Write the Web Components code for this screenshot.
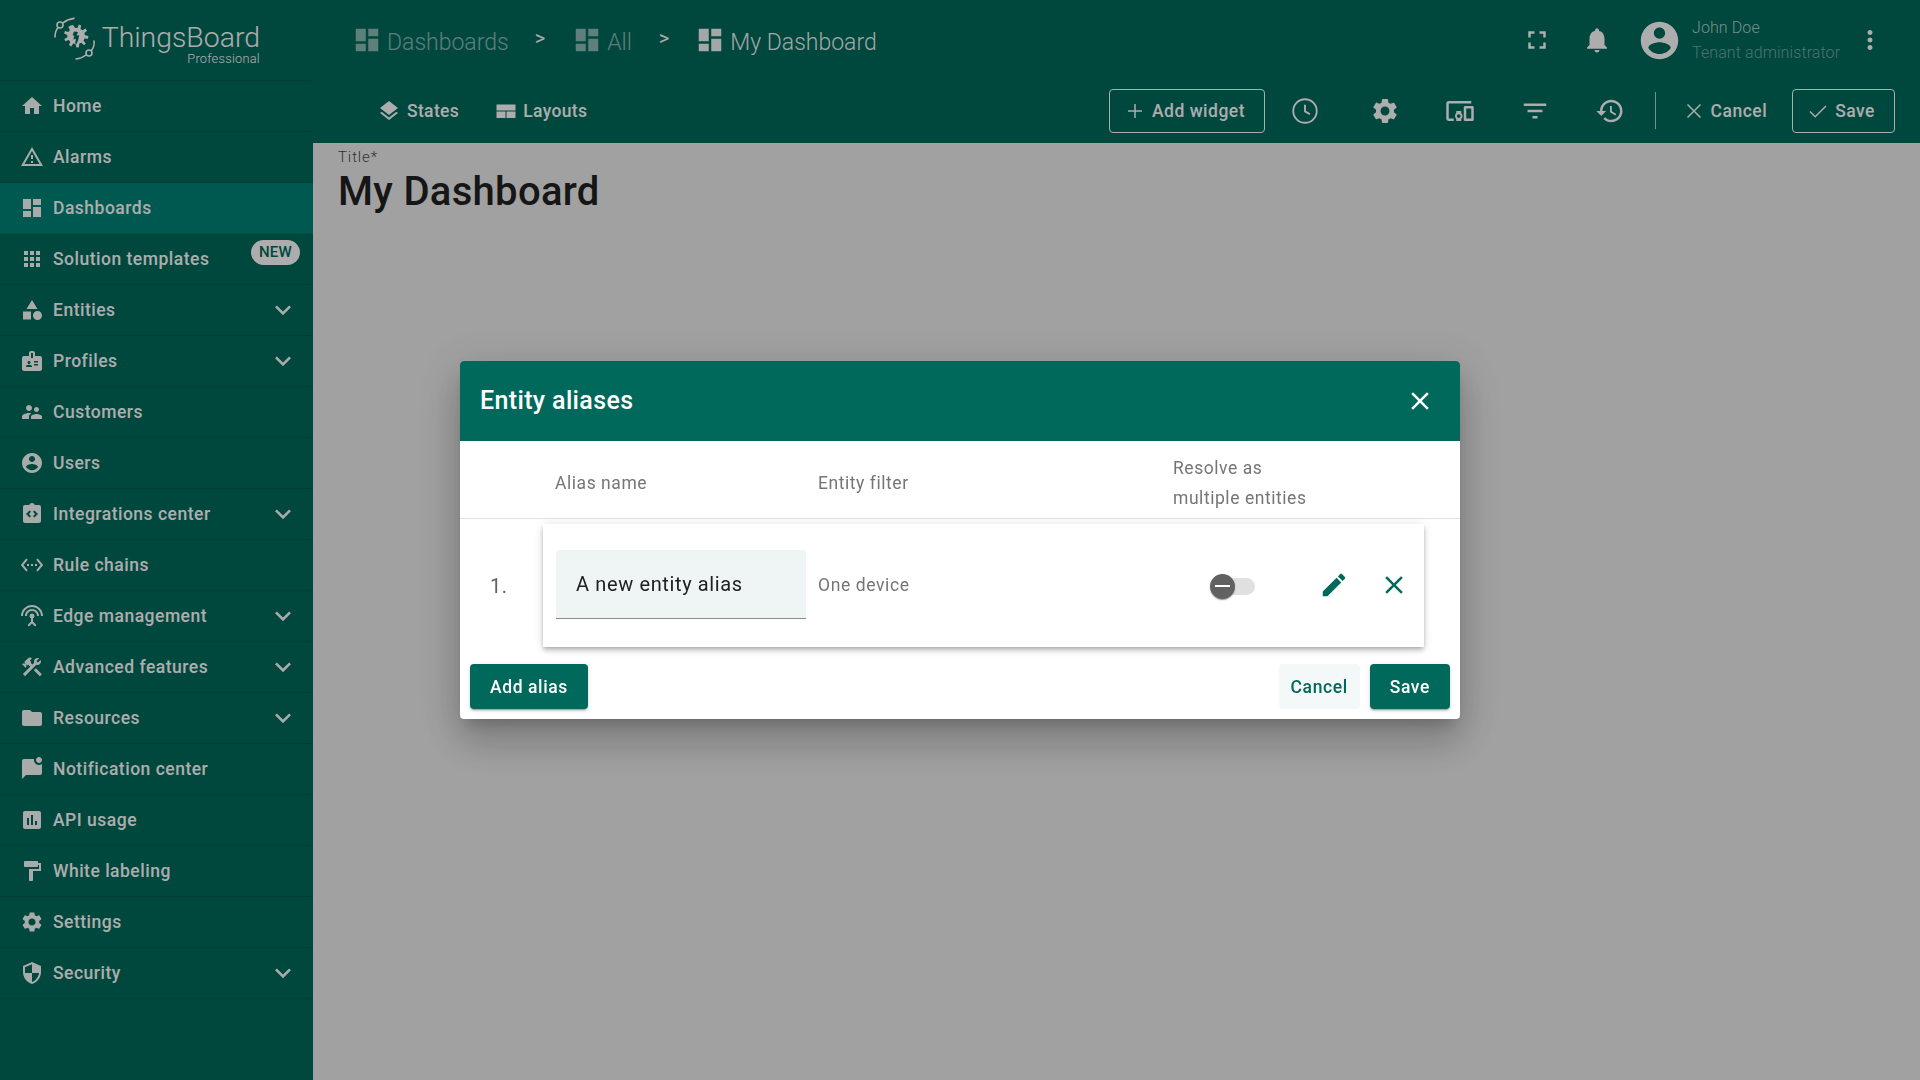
<!DOCTYPE html>
<html lang="en">
<head>
<meta charset="utf-8">
<title>ThingsBoard</title>
<style>
  html, body { margin: 0; height: 100%; }
  body { font-family: Roboto, "Liberation Sans", sans-serif; overflow: hidden; background: #eeeeee; }
</style>
</head>
<body>
<tb-app>
  <tb-sidenav slot="side">
    <tb-nav-item icon="home">Home</tb-nav-item>
    <tb-nav-item icon="warning">Alarms</tb-nav-item>
    <tb-nav-item icon="dashboard" active>Dashboards</tb-nav-item>
    <tb-nav-item icon="apps" badge="NEW">Solution templates</tb-nav-item>
    <tb-nav-item icon="category" expand>Entities</tb-nav-item>
    <tb-nav-item icon="badge" expand>Profiles</tb-nav-item>
    <tb-nav-item icon="people">Customers</tb-nav-item>
    <tb-nav-item icon="account">Users</tb-nav-item>
    <tb-nav-item icon="integration" expand>Integrations center</tb-nav-item>
    <tb-nav-item icon="ethernet">Rule chains</tb-nav-item>
    <tb-nav-item icon="antenna" expand>Edge management</tb-nav-item>
    <tb-nav-item icon="construction" expand>Advanced features</tb-nav-item>
    <tb-nav-item icon="folder" expand>Resources</tb-nav-item>
    <tb-nav-item icon="chat">Notification center</tb-nav-item>
    <tb-nav-item icon="assessment">API usage</tb-nav-item>
    <tb-nav-item icon="paint">White labeling</tb-nav-item>
    <tb-nav-item icon="settings">Settings</tb-nav-item>
    <tb-nav-item icon="security" expand>Security</tb-nav-item>
  </tb-sidenav>
  <tb-toolbar slot="top"></tb-toolbar>
  <tb-dash-title title-label="Title*">My Dashboard</tb-dash-title>
</tb-app>
<tb-alias-dialog heading="Entity aliases"></tb-alias-dialog>

<script>
const ICONS = {
  home: "M10 20v-6h4v6h5v-8h3L12 3 2 12h3v8z",
  warning: "M12 5.99L19.53 19H4.47L12 5.99M12 2L1 21h22L12 2zm1 14h-2v2h2v-2zm0-6h-2v4h2v-4z",
  dashboard: "M3 13h8V3H3v10zm0 8h8v-6H3v6zm10 0h8V11h-8v10zm0-18v6h8V3h-8z",
  apps: "M4 8h4V4H4v4zm6 12h4v-4h-4v4zm-6 0h4v-4H4v4zm0-6h4v-4H4v4zm6 0h4v-4h-4v4zm6-10v4h4V4h-4zm-6 4h4V4h-4v4zm6 6h4v-4h-4v4zm0 6h4v-4h-4v4z",
  category: "M12 2l-5.5 9h11zM17.5 13a4.5 4.5 0 1 0 0 9 4.5 4.5 0 0 0 0-9zM3 13.5h8v8H3z",
  badge: "M20 7h-5V4c0-1.1-.9-2-2-2h-2c-1.1 0-2 .9-2 2v3H4c-1.1 0-2 .9-2 2v11c0 1.1.9 2 2 2h16c1.1 0 2-.9 2-2V9c0-1.1-.9-2-2-2zM9 12c.83 0 1.5.67 1.5 1.5S9.83 15 9 15s-1.5-.67-1.5-1.5S8.17 12 9 12zm3 6H6v-.75c0-1 2-1.5 3-1.5s3 .5 3 1.5V18zm1-9h-2V4h2v5zm5 7.5h-4V15h4v1.5zm0-3h-4V12h4v1.5z",
  people: "M16.5 12c1.38 0 2.49-1.12 2.49-2.5S17.88 7 16.5 7C15.12 7 14 8.12 14 9.5s1.12 2.5 2.5 2.5zM9 11c1.66 0 2.99-1.34 2.99-3S10.66 5 9 5C7.34 5 6 6.34 6 8s1.34 3 3 3zm7.5 3c-1.83 0-5.5.92-5.5 2.75V19h11v-2.25c0-1.83-3.67-2.75-5.5-2.75zM9 13c-2.33 0-7 1.17-7 3.5V19h7v-2.25c0-.85.33-2.34 2.37-3.47C10.5 13.1 9.66 13 9 13z",
  account: "M12 2C6.48 2 2 6.48 2 12s4.48 10 10 10 10-4.48 10-10S17.52 2 12 2zm0 3c1.66 0 3 1.34 3 3s-1.34 3-3 3-3-1.34-3-3 1.34-3 3-3zm0 14.2c-2.5 0-4.71-1.28-6-3.22.03-1.99 4-3.08 6-3.08 1.99 0 5.97 1.09 6 3.08-1.29 1.94-3.5 3.22-6 3.22z",
  integration: "M19 3h-4.18C14.4 1.84 13.3 1 12 1s-2.4.84-2.82 2H5c-1.1 0-2 .9-2 2v14c0 1.1.9 2 2 2h14c1.1 0 2-.9 2-2V5c0-1.1-.9-2-2-2zM11 14.17L9.59 15.59 6 12l3.59-3.59L11 9.83 8.83 12zM14.41 15.59L13 14.17 15.17 12 13 9.83l1.41-1.42L18 12z",
  ethernet: "M7.77 6.76L6.23 5.48.82 12l5.41 6.52 1.54-1.28L3.42 12l4.35-5.24zM7 13h2v-2H7v2zm10-2h-2v2h2v-2zm-6 2h2v-2h-2v2zm6.77-7.52l-1.54 1.28L20.58 12l-4.35 5.24 1.54 1.28L23.18 12l-5.41-6.52z",
  antenna: "M12 5c-3.87 0-7 3.13-7 7h2c0-2.76 2.24-5 5-5s5 2.24 5 5h2c0-3.87-3.13-7-7-7zm1 9.29c.88-.39 1.5-1.26 1.5-2.29 0-1.38-1.12-2.5-2.5-2.5S9.5 10.62 9.5 12c0 1.02.62 1.9 1.5 2.29v3.3L7.59 21 9 22.41l3-3 3 3L16.41 21 13 17.59v-3.3zM12 1C5.93 1 1 5.93 1 12h2c0-4.97 4.03-9 9-9s9 4.03 9 9h2c0-6.07-4.93-11-11-11z",
  construction: "M13.78 15.3l6 6 2.11-2.16-6-6zM17.5 10c1.93 0 3.5-1.57 3.5-3.5 0-.58-.16-1.12-.41-1.6l-2.7 2.7-1.49-1.49 2.7-2.7c-.48-.25-1.02-.41-1.6-.41C15.57 3 14 4.57 14 6.5c0 .41.08.8.21 1.16l-1.85 1.85-1.78-1.78.71-.71-1.41-1.41L12 3.49c-1.17-1.17-3.07-1.17-4.24 0L4.22 7.03l1.41 1.41H2.81l-.71.71 3.54 3.54.71-.71V9.15l1.41 1.41.71-.71 1.78 1.78-7.41 7.41 2.12 2.12L16.34 9.79c.36.13.75.21 1.16.21z",
  folder: "M10 4H4c-1.1 0-1.99.9-1.99 2L2 18c0 1.1.9 2 2 2h16c1.1 0 2-.9 2-2V8c0-1.1-.9-2-2-2h-8l-2-2z",
  chat: "M22 6.98V16c0 1.1-.9 2-2 2H6l-4 4V4c0-1.1.9-2 2-2h10.1c-.06.32-.1.66-.1 1 0 2.76 2.24 5 5 5 1.13 0 2.16-.39 3-1.02zM16 3c0 1.66 1.34 3 3 3s3-1.34 3-3-1.34-3-3-3-3 1.34-3 3z",
  assessment: "M19 3H5c-1.1 0-2 .9-2 2v14c0 1.1.9 2 2 2h14c1.1 0 2-.9 2-2V5c0-1.1-.9-2-2-2zM9 17H7v-7h2v7zm4 0h-2V7h2v10zm4 0h-2v-4h2v4z",
  paint: "M18 4V3c0-.55-.45-1-1-1H5c-.55 0-1 .45-1 1v4c0 .55.45 1 1 1h12c.55 0 1-.45 1-1V6h1v4H9v11c0 .55.45 1 1 1h2c.55 0 1-.45 1-1v-9h8V4h-3z",
  settings: "M19.14 12.94c.04-.3.06-.61.06-.94 0-.32-.02-.64-.07-.94l2.03-1.58c.18-.14.23-.41.12-.61l-1.92-3.32c-.12-.22-.37-.29-.59-.22l-2.39.96c-.5-.38-1.03-.7-1.62-.94l-.36-2.54c-.04-.24-.24-.41-.48-.41h-3.84c-.24 0-.43.17-.47.41l-.36 2.54c-.59.24-1.13.57-1.62.94l-2.39-.96c-.22-.08-.47 0-.59.22L2.74 8.87c-.12.21-.08.47.12.61l2.03 1.58c-.05.3-.09.63-.09.94s.02.64.07.94l-2.03 1.58c-.18.14-.23.41-.12.61l1.92 3.32c.12.22.37.29.59.22l2.39-.96c.5.38 1.03.7 1.62.94l.36 2.54c.05.24.24.41.48.41h3.84c.24 0 .44-.17.47-.41l.36-2.54c.59-.24 1.13-.56 1.62-.94l2.39.96c.22.08.47 0 .59-.22l1.92-3.32c.12-.22.07-.47-.12-.61l-2.01-1.58zM12 15.6c-1.98 0-3.6-1.62-3.6-3.6s1.62-3.6 3.6-3.6 3.6 1.62 3.6 3.6-1.62 3.6-3.6 3.6z",
  security: "M12 1L3 5v6c0 5.55 3.84 10.74 9 12 5.16-1.26 9-6.45 9-12V5l-9-4zm0 10.99h7c-.53 4.12-3.28 7.79-7 8.94V12H5V6.3l7-3.11v8.8z",
  expand: "M16.59 8.59L12 13.17 7.41 8.59 6 10l6 6 6-6z",
  layers: "M11.99 18.54l-7.37-5.73L3 14.07l9 7 9-7-1.63-1.27-7.38 5.74zM12 16l7.36-5.73L21 9l-9-7-9 7 1.63 1.27L12 16z",
  layouts: "M2.5 5.5h19v6h-19zM2.5 12.5h9V19h-9zM12.5 12.5h9V19h-9z",
  devices: "M3 6h18V4H3c-1.1 0-2 .9-2 2v12c0 1.1.9 2 2 2h4v-2H3V6zm10 6H9v1.78c-.61.55-1 1.33-1 2.22s.39 1.67 1 2.22V20h4v-1.78c.61-.55 1-1.34 1-2.22s-.39-1.67-1-2.22V12zm-2 5.5c-.83 0-1.5-.67-1.5-1.5s.67-1.5 1.5-1.5 1.5.67 1.5 1.5-.67 1.5-1.5 1.5zM22 8h-6c-.5 0-1 .5-1 1v10c0 .5.5 1 1 1h6c.5 0 1-.5 1-1V9c0-.5-.5-1-1-1zm-1 10h-4v-8h4v8z",
  filter: "M10 18h4v-2h-4v2zM3 6v2h18V6H3zm3 7h12v-2H6v2z",
  history: "M13 3c-4.97 0-9 4.03-9 9H1l3.89 3.89.07.14L9 12H6c0-3.87 3.13-7 7-7s7 3.13 7 7-3.13 7-7 7c-1.93 0-3.68-.79-4.94-2.06l-1.42 1.42C8.27 19.99 10.51 21 13 21c4.97 0 9-4.03 9-9s-4.03-9-9-9zm-1 5v5l4.28 2.54.72-1.21-3.5-2.08V8H12z",
  fullscreen: "M7 14H5v5h5v-2H7v-3zm-2-4h2V7h3V5H5v5zm12 7h-3v2h5v-5h-2v3zM14 5v2h3v3h2V5h-5z",
  bell: "M12 22c1.1 0 2-.9 2-2h-4c0 1.1.89 2 2 2zm6-6v-5c0-3.07-1.64-5.64-4.5-6.32V4c0-.83-.67-1.5-1.5-1.5s-1.5.67-1.5 1.5v.68C7.63 5.36 6 7.92 6 11v5l-2 2v1h16v-1l-2-2z",
  more: "M12 8c1.1 0 2-.9 2-2s-.9-2-2-2-2 .9-2 2 .9 2 2 2zm0 2c-1.1 0-2 .9-2 2s.9 2 2 2 2-.9 2-2-.9-2-2-2zm0 6c-1.1 0-2 .9-2 2s.9 2 2 2 2-.9 2-2-.9-2-2-2z",
  close: "M19 6.41L17.59 5 12 10.59 6.41 5 5 6.41 10.59 12 5 17.59 6.41 19 12 13.41 17.59 19 19 17.59 13.41 12z",
  edit: "M3 17.25V21h3.75L17.81 9.94l-3.75-3.75L3 17.25zM20.71 7.04c.39-.39.39-1.02 0-1.41l-2.34-2.34c-.39-.39-1.02-.39-1.41 0l-1.83 1.83 3.75 3.75 1.83-1.83z",
  // thin outlined ones, drawn with a stroke
  clock: "~M12 2.6a9.4 9.4 0 1 0 0 18.8 9.4 9.4 0 0 0 0-18.8zM12 7v5.3l4 2.3",
  plus: "~M12 5v14M5 12h14",
  thinclose: "~M5.5 5.5l13 13M18.5 5.5l-13 13",
  check: "~M4 12.5l5.2 5.2L20 7"
};

class TbIcon extends HTMLElement {
  constructor() {
    super();
    this.attachShadow({ mode: "open" });
  }
  connectedCallback() {
    const size = this.getAttribute("size") || 24;
    const d = ICONS[this.getAttribute("name")] || "";
    const thin = d.startsWith("~");
    const paint = thin ? `fill="none" stroke="currentColor" stroke-width="1.5"` : `fill="currentColor" fill-rule="${this.hasAttribute("evenodd") ? "evenodd" : "nonzero"}"`;
    this.shadowRoot.innerHTML = `
      <style>
        :host { display: inline-flex; flex: none; width: ${size}px; height: ${size}px; }
        svg { display: block; width: 100%; height: 100%; }
      </style>
      <svg viewBox="0 0 24 24"><path ${paint} d="${thin ? d.slice(1) : d}"></path></svg>`;
  }
}
customElements.define("tb-icon", TbIcon);

class TbApp extends HTMLElement {
  constructor() {
    super();
    this.attachShadow({ mode: "open" });
    this.shadowRoot.innerHTML = `
      <style>
        :host { display: grid; grid-template-columns: 313px 1fr; grid-template-rows: 143px 1fr; height: 100vh; }
        .side { grid-row: 1 / 3; display: flex; }
        .top { display: flex; }
        .content { background: #eeeeee; }
      </style>
      <div class="side"><slot name="side"></slot></div>
      <div class="top"><slot name="top"></slot></div>
      <div class="content"><slot></slot></div>`;
  }
}
customElements.define("tb-app", TbApp);

class TbSidenav extends HTMLElement {
  constructor() {
    super();
    this.attachShadow({ mode: "open" });
    this.shadowRoot.innerHTML = `
      <style>
        :host { display: block; width: 313px; background: #00695c; color: #fff; }
        .logo { height: 80px; border-bottom: 1px solid rgba(0,0,0,.12); display: flex; box-sizing: content-box; padding-left: 54px; }
        .logo svg { width: 44px; height: 44px; margin-top: 17px; flex: none; color: #fff; }
        .brand { margin-left: 5px; width: 157px; display: flex; flex-direction: column; align-items: flex-end; }
        .name { font-size: 28.4px; font-weight: 300; line-height: 28px; margin-top: 23.5px; white-space: nowrap; }
        .pro { font-size: 12.8px; font-weight: 300; line-height: 14px; letter-spacing: .25px; white-space: nowrap; }
      </style>
      <div class="logo">
        <svg viewBox="0 0 44 44">
          <g fill="none" stroke="currentColor" stroke-width="1.6" stroke-linecap="round">
            <path d="M1 20C1 16 2 13 4 10.5"></path>
            <circle cx="6" cy="8" r="3"></circle>
            <path d="M9 5.8C12 3.4 16 2 20 1.4"></path>
            <path d="M40 24C40.5 27 40 30 37.5 33.5"></path>
            <circle cx="35" cy="36" r="3"></circle>
            <path d="M32 38C29 40.5 26 41.6 22 42"></path>
          </g>
          <path fill="currentColor" fill-rule="evenodd" d="M19 8l2.2 3 2.4-.2 1.2-3.4 2.4 1 -.7 3.5 2 1.4 3-1.8 1.5 2.2-2.6 2.2.6 2.4 3.4.8-.4 2.6-3.5-.1-1 2.2 2.4 2.6-1.9 1.8-2.6-2.4-2.2 1 -.2 3.5-2.6.2-.8-3.4-2.4-.5-2 2.9-2.2-1.4 1.3-3.3-1.7-1.7-3.3 1.2-1-2.4 3.1-1.6-.1-2.4-3.2-1.4.9-2.4 3.4.8 1.5-1.9-1.7-3 2.3-1.4z M20 14.5l4 .5 -1.4 3.6 2.6 -.4-1 4.8 -1.6 4-1.4-.8 .8-4.4-2.6.6 1-3.6-1.8-.6z"></path>
        </svg>
        <div class="brand">
          <div class="name">ThingsBoard</div>
          <div class="pro">Professional</div>
        </div>
      </div>
      <slot></slot>`;
  }
}
customElements.define("tb-sidenav", TbSidenav);

class TbNavItem extends HTMLElement {
  constructor() {
    super();
    this.attachShadow({ mode: "open" });
  }
  connectedCallback() {
    const badge = this.getAttribute("badge");
    this.shadowRoot.innerHTML = `
      <style>
        :host { display: flex; align-items: center; position: relative; height: 50px; padding-left: 20px;
                border-bottom: 1px solid rgba(0,0,0,.12); font-size: 17.5px; font-weight: 500; letter-spacing: .5px; }
        :host([active]) { background: #008376; }
        .label { margin-left: 9px; flex: 1; white-space: nowrap; }
        tb-icon { opacity: .98; }
        .chev { margin-right: 14px; }
        .badge { position: absolute; left: 251px; top: 6px; height: 25px; width: 49px; border-radius: 13px; background: #fff;
                 color: #00695c; font-size: 15px; font-weight: 500; line-height: 25px; text-align: center; letter-spacing: .3px; }
      </style>
      <tb-icon name="${this.getAttribute("icon")}" ${this.getAttribute("icon") === "integration" ? "evenodd" : ""}></tb-icon>
      <span class="label"><slot></slot></span>
      ${this.hasAttribute("expand") ? `<tb-icon class="chev" name="expand" size="32"></tb-icon>` : ""}
      ${badge ? `<span class="badge">${badge}</span>` : ""}`;
  }
}
customElements.define("tb-nav-item", TbNavItem);

class TbCrumb extends HTMLElement {
  constructor() {
    super();
    this.attachShadow({ mode: "open" });
    this.shadowRoot.innerHTML = `
      <style>
        :host { display: flex; align-items: center; gap: 5px; font-size: 23px; font-weight: 300; color: rgba(255,255,255,.55); white-space: nowrap; }
        :host([current]) { color: rgba(255,255,255,.95); }
        span { position: relative; top: 2px; }
      </style>
      <tb-icon name="dashboard" size="30"></tb-icon><span><slot></slot></span>`;
  }
}
customElements.define("tb-crumb", TbCrumb);

class TbOutlineButton extends HTMLElement {
  constructor() {
    super();
    this.attachShadow({ mode: "open" });
  }
  connectedCallback() {
    this.shadowRoot.innerHTML = `
      <style>
        :host { display: inline-flex; align-items: center; box-sizing: border-box; height: 44px; padding: 0 19px 0 13px; gap: 5px;
                border: 1px solid #fff; border-radius: 4px; font-size: 17.5px; font-weight: 500; letter-spacing: .5px; white-space: nowrap; }
        :host([flat]) { border-color: transparent; }
      </style>
      <tb-icon name="${this.getAttribute("icon")}"></tb-icon><slot></slot>`;
  }
}
customElements.define("tb-outline-button", TbOutlineButton);

class TbToolbar extends HTMLElement {
  constructor() {
    super();
    this.attachShadow({ mode: "open" });
    this.shadowRoot.innerHTML = `
      <style>
        :host { display: block; flex: 1; background: #00695c; color: #fff; }
        .row1 { height: 80px; display: flex; align-items: center; padding: 0 35px 0 39px; }
        .sep { font-size: 20px; font-weight: 400; color: #fff; margin: -4px 27px 0 26px; }
        .sep.second { margin-left: 27px; margin-right: 26px; }
        .user { margin-left: auto; display: flex; align-items: center; }
        .who { margin-left: 10px; width: 163px; font-size: 16px; font-weight: 300; line-height: 25px; letter-spacing: .1px; }
        .who div:first-child { color: rgba(255,255,255,.7); }
        .who div:last-child { color: rgba(255,255,255,.45); }
        .row2 { height: 63px; display: flex; align-items: center; padding: 0 25px 0 64px; margin-top: -1px; }
        .tab { display: flex; align-items: center; font-size: 17.5px; font-weight: 500; letter-spacing: .35px; gap: 6px; }
        .tab + .tab { margin-left: 35px; gap: 5px; }
        .tools { margin-left: auto; display: flex; align-items: center; }
        .divider { width: 1px; height: 37px; background: rgba(255,255,255,.7); margin: 0 11.5px 0 30px; }
        .save { margin-left: 5px; }
      </style>
      <div class="row1">
        <tb-crumb>Dashboards</tb-crumb><span class="sep">&gt;</span>
        <tb-crumb>All</tb-crumb><span class="sep second">&gt;</span>
        <tb-crumb current>My Dashboard</tb-crumb>
        <div class="user">
          <tb-icon name="fullscreen" size="30"></tb-icon>
          <tb-icon name="bell" size="30" style="margin-left:30px"></tb-icon>
          <tb-icon name="account" size="45" style="margin-left:25px"></tb-icon>
          <div class="who"><div>John Doe</div><div>Tenant administrator</div></div>
          <tb-icon name="more" size="30"></tb-icon>
        </div>
      </div>
      <div class="row2">
        <div class="tab"><tb-icon name="layers"></tb-icon>States</div>
        <div class="tab"><tb-icon name="layouts"></tb-icon>Layouts</div>
        <div class="tools">
          <tb-outline-button icon="plus">Add widget</tb-outline-button>
          <tb-icon name="clock" size="30" style="margin-left:25px"></tb-icon>
          <tb-icon name="settings" size="30" style="margin-left:50px"></tb-icon>
          <tb-icon name="devices" size="30" style="margin-left:45px"></tb-icon>
          <tb-icon name="filter" size="30" style="margin-left:45px"></tb-icon>
          <tb-icon name="history" size="30" style="margin-left:45px"></tb-icon>
          <div class="divider"></div>
          <tb-outline-button flat icon="thinclose">Cancel</tb-outline-button>
          <tb-outline-button class="save" icon="check">Save</tb-outline-button>
        </div>
      </div>`;
  }
}
customElements.define("tb-toolbar", TbToolbar);

class TbDashTitle extends HTMLElement {
  constructor() {
    super();
    this.attachShadow({ mode: "open" });
  }
  connectedCallback() {
    this.shadowRoot.innerHTML = `
      <style>
        :host { display: block; padding: 5px 0 0 25px; }
        .lbl { font-size: 15px; font-weight: 300; line-height: 18px; letter-spacing: .9px; color: rgba(0,0,0,.75); }
        .val { font-size: 40px; font-weight: 500; line-height: 47px; letter-spacing: .3px; color: #212121; margin-top: 2px; }
      </style>
      <div class="lbl">${this.getAttribute("title-label")}</div>
      <div class="val"><slot></slot></div>`;
  }
}
customElements.define("tb-dash-title", TbDashTitle);

class TbButton extends HTMLElement {
  constructor() {
    super();
    this.attachShadow({ mode: "open" });
    this.shadowRoot.innerHTML = `
      <style>
        :host { display: inline-flex; align-items: center; box-sizing: border-box; height: 45px; padding: 0 20px; border-radius: 4px;
                font-size: 17.5px; font-weight: 500; letter-spacing: .6px; background: #00695c; color: #fff;
                box-shadow: 0 3px 1px -2px rgba(0,0,0,.2), 0 2px 2px 0 rgba(0,0,0,.14), 0 1px 5px 0 rgba(0,0,0,.12); }
        :host([plain]) { background: #f4f8f8; color: #00695c; box-shadow: none; padding: 0 12px; }
      </style>
      <slot></slot>`;
  }
}
customElements.define("tb-button", TbButton);

class TbToggle extends HTMLElement {
  constructor() {
    super();
    this.attachShadow({ mode: "open" });
    this.shadowRoot.innerHTML = `
      <style>
        :host { display: block; width: 40px; height: 17px; background: #e0e0e0; border-radius: 9px; position: relative; }
        .thumb { position: absolute; left: -5px; top: -4px; width: 25px; height: 25px; border-radius: 50%; background: #616161;
                 display: flex; align-items: center; justify-content: center;
                 box-shadow: 0 2px 1px -1px rgba(0,0,0,.2), 0 1px 1px 0 rgba(0,0,0,.14), 0 1px 3px 0 rgba(0,0,0,.12); }
        .thumb i { display: block; width: 15px; height: 2px; background: #fff; }
      </style>
      <div class="thumb"><i></i></div>`;
  }
}
customElements.define("tb-toggle", TbToggle);

class TbAliasRow extends HTMLElement {
  constructor() {
    super();
    this.attachShadow({ mode: "open" });
  }
  connectedCallback() {
    this.shadowRoot.innerHTML = `
      <style>
        :host { display: flex; align-items: center; height: 123px; margin-top: 5px; }
        .num { width: 83px; box-sizing: border-box; padding-left: 30px; font-size: 20px; color: #616161; letter-spacing: .6px; }
        .card { width: 881px; height: 123px; background: #fff; display: flex; align-items: center; padding-left: 13px; box-sizing: border-box;
                box-shadow: 0 2px 4px -1px rgba(0,0,0,.2), 0 4px 5px 0 rgba(0,0,0,.14), 0 1px 10px 0 rgba(0,0,0,.12); }
        .input { width: 250px; height: 69px; box-sizing: border-box; background: #eff4f4; border-bottom: 1px solid #8a8a8a; border-radius: 4px 4px 0 0;
                 padding-left: 20px; line-height: 68px; font-size: 20px; letter-spacing: .63px; color: #212121; margin-top: -3px; }
        .filter { margin-left: 12px; margin-top: -2px; width: 397px; font-size: 17.5px; letter-spacing: .6px; color: #757575; }
        tb-toggle { margin-top: 1px; }
        .edit { margin-left: 64px; margin-top: -1px; color: #00695c; }
        .del { margin-left: 30px; margin-top: -1px; color: #00695c; }
      </style>
      <div class="num">${this.getAttribute("index")}.</div>
      <div class="card">
        <div class="input">${this.getAttribute("alias")}</div>
        <div class="filter">${this.getAttribute("filter")}</div>
        <tb-toggle></tb-toggle>
        <tb-icon class="edit" name="edit" size="30"></tb-icon>
        <tb-icon class="del" name="close" size="30"></tb-icon>
      </div>`;
  }
}
customElements.define("tb-alias-row", TbAliasRow);

class TbAliasDialog extends HTMLElement {
  constructor() {
    super();
    this.attachShadow({ mode: "open" });
  }
  connectedCallback() {
    this.shadowRoot.innerHTML = `
      <style>
        :host { position: fixed; top: 0; left: 0; right: 0; bottom: 0; display: flex; align-items: center; justify-content: center;
                background: rgba(0,0,0,.32); z-index: 1000; }
        .dialog { width: 1000px; height: 358px; background: #fff; border-radius: 4px; overflow: hidden; display: flex; flex-direction: column;
                  box-shadow: 0 11px 15px -7px rgba(0,0,0,.2), 0 24px 38px 3px rgba(0,0,0,.14), 0 9px 46px 8px rgba(0,0,0,.12); }
        header { height: 80px; flex: none; background: #00695c; color: #fff; display: flex; align-items: center; justify-content: space-between;
                 padding: 0 25px 0 20px; font-size: 25px; font-weight: 500; letter-spacing: .36px; }
        header span { margin-top: -2px; }
        .head { height: 78px; flex: none; box-sizing: border-box; border-bottom: 1px solid #e0e0e0; display: grid;
                grid-template-columns: 263px 355px 1fr; align-items: center; padding: 6px 0 0 95px;
                font-size: 17.5px; letter-spacing: .55px; color: #757575; line-height: 30px; }
        footer { margin-top: auto; display: flex; align-items: center; gap: 10px; padding: 0 10px 10px; }
        .grow { flex: 1; }
      </style>
      <div class="dialog">
        <header><span>${this.getAttribute("heading")}</span><tb-icon name="close" size="30"></tb-icon></header>
        <div class="head"><div>Alias name</div><div>Entity filter</div><div>Resolve as<br>multiple entities</div></div>
        <tb-alias-row index="1" alias="A new entity alias" filter="One device"></tb-alias-row>
        <footer>
          <tb-button>Add alias</tb-button>
          <div class="grow"></div>
          <tb-button plain>Cancel</tb-button>
          <tb-button>Save</tb-button>
        </footer>
      </div>`;
  }
}
customElements.define("tb-alias-dialog", TbAliasDialog);
</script>
</body>
</html>
